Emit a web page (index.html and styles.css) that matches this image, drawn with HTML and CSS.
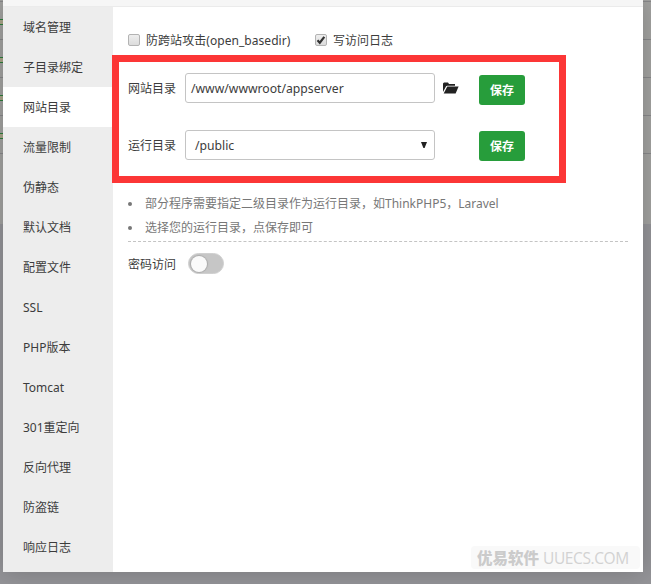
FILE: index.html
```html
<!DOCTYPE html>
<html lang="zh-CN">
<head>
<meta charset="utf-8">
<title>网站目录</title>
<link rel="stylesheet" href="styles.css">
</head>
<body>
<div class="table-edge"></div>
<div class="marks"><i></i><i></i><i></i><i></i></div>
<div class="dialog">
  <header class="titlebar"></header>
  <div class="body">
    <nav class="menu">
      <a>域名管理</a>
      <a>子目录绑定</a>
      <a class="active">网站目录</a>
      <a>流量限制</a>
      <a>伪静态</a>
      <a>默认文档</a>
      <a>配置文件</a>
      <a>SSL</a>
      <a>PHP版本</a>
      <a>Tomcat</a>
      <a>301重定向</a>
      <a>反向代理</a>
      <a>防盗链</a>
      <a>响应日志</a>
    </nav>
    <main class="content">
      <div class="checks">
        <span class="box"></span><span class="check-label first">防跨站攻击(open_basedir)</span>
        <span class="box"><svg viewBox="0 0 12 12" width="12" height="12"><path d="M2.5 6.2 4.8 8.7 9.3 2.9" fill="none" stroke="#333" stroke-width="2.2"/></svg></span><span class="check-label">写访问日志</span>
      </div>
      <div class="row path-row">
        <span class="label">网站目录</span>
        <div class="field">/www/wwwroot/appserver</div>
        <svg class="folder" viewBox="0 0 16 12" width="16" height="12"><path d="M0 10V1.5L1 .5H5L6 2H12V3.7H4.2L3.1 4.3Z" fill="#222"/><path d="M4.3 4.6H15.6L12.6 11.4H.7Z" fill="#222"/></svg>
        <span class="save">保存</span>
      </div>
      <div class="row run-row">
        <span class="label">运行目录</span>
        <div class="field select">/public<svg viewBox="0 0 6 6" width="6" height="6"><path d="M0 0H6L3.6 6H2.4Z" fill="#222"/></svg></div>
        <span class="save">保存</span>
      </div>
      <ul class="tips">
        <li>部分程序需要指定二级目录作为运行目录，如ThinkPHP5，Laravel</li>
        <li>选择您的运行目录，点保存即可</li>
      </ul>
      <div class="access"><span class="label">密码访问</span><span class="toggle"></span></div>
    </main>
  </div>
  <div class="highlight"></div>
  <div class="watermark"><b>优易软件</b><span>UUECS.COM</span></div>
</div>
</body>
</html>
```
FILE: styles.css
```css
* { box-sizing: border-box; }
body {
  margin: 0;
  width: 651px;
  height: 584px;
  position: relative;
  overflow: hidden;
  background: #949498;
  font: 12px/20px "Noto Sans", "Noto Sans CJK SC", sans-serif;
  color: #3c3c3c;
}
.table-edge {
  position: absolute;
  inset: 0 0 auto 0;
  height: 224px;
  background: linear-gradient(#88888a, #88888a) 0 153px / 100% 1px no-repeat,
    repeating-linear-gradient(#a2a2a0 0 1px, #88888a 1px 2px, #a2a2a0 2px 38px) 0 0 / 100% 153px no-repeat,
    #a2a2a0;
}
.marks {
  position: absolute;
  left: 0;
  top: 19px;
  width: 3px;
  display: grid;
  gap: 32px;
}
.marks i {
  height: 6px;
  border: solid #2c7d3c;
  border-width: 1px 0;
  background: #aaa58a;
}
.dialog {
  position: relative;
  width: 640px;
  height: 572px;
  margin-left: 3px;
  background: #fff;
  display: flex;
  flex-direction: column;
  box-shadow: 0 0 24px rgba(0, 0, 0, .2);
}
.titlebar {
  height: 7px;
  flex: none;
  background: #f6f6f6;
  border-bottom: 1px solid #ebebeb;
}
.body { display: flex; flex: 1; }
.menu { width: 110px; background: #ededed; }
.menu a {
  display: block;
  height: 40px;
  line-height: 40px;
  padding: 1px 0 0 20px;
}
.menu .active { background: #fff; }
.content { flex: 1; padding: 23px 15px 0; }
.checks { display: flex; align-items: center; height: 20px; padding-top: 1px; }
.box {
  width: 12px;
  height: 12px;
  border: 1px solid #b3b3b3;
  border-radius: 2px;
  background: linear-gradient(#eee, #dcdcdc);
  margin: -1px 6px 0 0;
}
.box svg { display: block; margin: -1px; }
.check-label.first { width: 145px; margin-right: 24px; white-space: nowrap; letter-spacing: .05px; }
.row { display: flex; align-items: center; height: 30px; }
.path-row { margin-top: 23px; }
.run-row { margin-top: 27px; }
.label { width: 57px; padding-top: 2px; }
.field {
  width: 250px;
  height: 30px;
  border: 1px solid #c4c4c4;
  border-radius: 3px;
  padding-left: 5px;
  font-size: 12.2px;
  line-height: 29px;
}
.select {
  display: flex;
  justify-content: space-between;
  align-items: center;
  padding: 0 7px 0 9px;
}
.folder { margin: 0 20px 0 8px; }
.save {
  width: 46px;
  height: 30px;
  border-radius: 3px;
  background: #279d3b;
  color: #fff;
  text-align: center;
  line-height: 31px;
  font-weight: 700;
  position: relative;
  top: 2px;
}
.run-row .save { margin-left: 44px; top: 1px; }
.tips {
  margin: 32px 0 0;
  padding: 0 0 1px 17px;
  list-style: none;
  line-height: 24px;
  color: #777;
  width: 500px;
  border-bottom: 1px dashed #c4c4c4;
}
.tips li::before {
  content: "";
  float: left;
  width: 4px;
  height: 4px;
  margin: 10px 0 0 -17px;
  border-radius: 50%;
  background: #777;
}
.access { display: flex; align-items: center; margin-top: 10px; height: 22px; }
.access .label { width: 60px; padding-top: 3px; }
.toggle {
  width: 36px;
  height: 21px;
  padding: 2px;
  border-radius: 11px;
  background: #c6c6c6;
  border: 1px solid #d0d0d0;
}
.toggle::before {
  content: "";
  display: block;
  width: 16px;
  height: 16px;
  border-radius: 50%;
  background: #fafafa;
  box-shadow: 0 0 1px 1px #aaa;
}
.highlight {
  position: absolute;
  left: 109px;
  top: 55px;
  width: 454px;
  height: 128px;
  border: 7px solid #fc3636;
}
.watermark {
  position: absolute;
  right: 3px;
  bottom: 3px;
  width: 169px;
  height: 23px;
  border-radius: 4px;
  background: #f9f9f9;
  color: #cbcbcb;
  display: flex;
  align-items: center;
  padding-left: 6px;
  white-space: nowrap;
}
.watermark b { font-size: 15.5px; font-weight: 900; width: 66px; }
.watermark span { font: 15.5px "Open Sans", sans-serif; letter-spacing: -.4px; color: #d2d2d2; }
```
